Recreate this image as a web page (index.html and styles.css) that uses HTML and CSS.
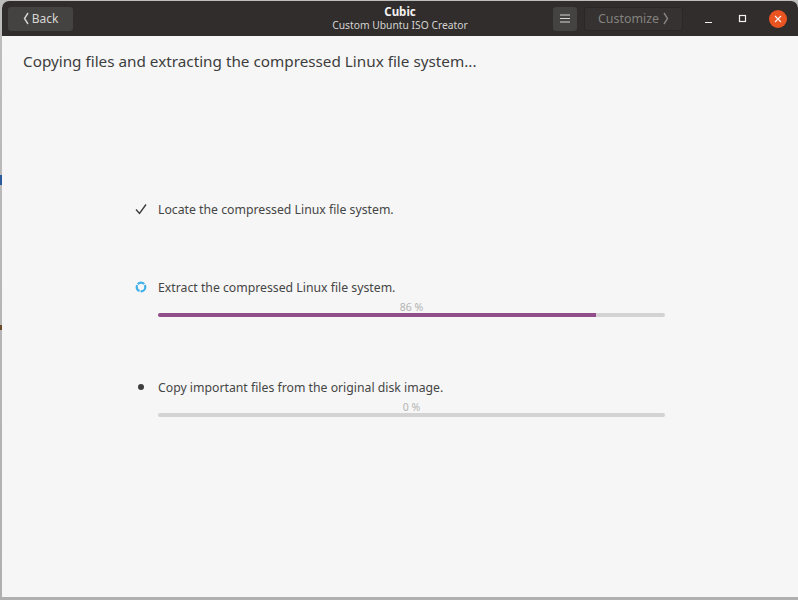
FILE: index.html
```html
<!DOCTYPE html>
<html lang="en">
  <head>
    <meta charset="UTF-8" />
    <title>Cubic</title>
    <link rel="stylesheet" href="styles.css">
  </head>
  <body>
    <div class="window">
      <div class="titlebar">
        <button class="btn btn_back">
          <svg class="chevron" width="6" height="13" viewBox="0 0 6 13"><path d="M5 1 L1.5 6.5 L5 12" /></svg>
          Back
        </button>
        <div class="title">
          <div class="title_main">Cubic</div>
          <div class="title_sub">Custom Ubuntu ISO Creator</div>
        </div>
        <button class="btn btn_menu">
          <svg width="10" height="9" viewBox="0 0 10 9"><path d="M0 1 H10 M0 4.5 H10 M0 8 H10" /></svg>
        </button>
        <button class="btn btn_next">
          Customize
          <svg class="chevron" width="6" height="13" viewBox="0 0 6 13"><path d="M1 1 L4.5 6.5 L1 12" /></svg>
        </button>
        <div class="win_controls">
          <svg width="10" height="10" viewBox="0 0 10 10"><path d="M1 8.5 H8" /></svg>
          <svg width="10" height="10" viewBox="0 0 10 10"><rect x="1.5" y="1.5" width="6" height="6" /></svg>
          <span class="win_close">
            <svg width="8" height="8" viewBox="0 0 8 8"><path d="M1 1 L7 7 M7 1 L1 7" /></svg>
          </span>
        </div>
      </div>

      <div class="content">
        <h1 class="heading">Copying files and extracting the compressed Linux file system...</h1>
        <ul class="steps">
          <li class="step step_done">
            <div class="step_row">
              <span class="step_icon">
                <svg width="14" height="14" viewBox="0 0 14 14"><path class="check" d="M2 7.5 L5.5 11.5 L12 2.5" /></svg>
              </span>
              <span>Locate the compressed Linux file system.</span>
            </div>
          </li>
          <li class="step step_active">
            <div class="step_row">
              <span class="step_icon">
                <svg class="spinner_icon" width="12" height="12" viewBox="0 0 12 12"><circle class="spinner" cx="6" cy="6" r="4.3" /></svg>
              </span>
              <span>Extract the compressed Linux file system.</span>
            </div>
            <div class="percent">86 %</div>
            <div class="bar"><div class="bar_fill" style="width: 86.4%"></div></div>
          </li>
          <li class="step step_todo">
            <div class="step_row">
              <span class="step_icon"><span class="dot"></span></span>
              <span>Copy important files from the original disk image.</span>
            </div>
            <div class="percent">0 %</div>
            <div class="bar"></div>
          </li>
        </ul>
      </div>
    </div>
  </body>
</html>
```

FILE: styles.css
```css
* {
  padding: 0;
  margin: 0;
  box-sizing: border-box;
}
body {
  width: 798px;
  height: 600px;
  overflow: hidden;
  padding: 1px 0 3px 2px;
  background:
    linear-gradient(#2a5a9a, #2a5a9a) 0 175px / 2px 10px no-repeat,
    linear-gradient(#6b4a2a, #6b4a2a) 0 325px / 2px 5px no-repeat,
    linear-gradient(#bdbdbd, #b0b0b0);
  font-family: "Noto Sans", "Liberation Sans", sans-serif;
  color: #3d3d3d;
}
.window {
  height: 596px;
  display: flex;
  flex-direction: column;
  background-color: #f6f6f6;
  border-radius: 7px 7px 0 0;
  overflow: hidden;
}

/* title bar */
.titlebar {
  height: 35px;
  flex: none;
  display: flex;
  align-items: center;
  padding: 0 11px 0 6px;
  background-color: #302d2c;
  color: #f2f1f0;
  position: relative;
}
.btn {
  height: 24px;
  display: flex;
  align-items: center;
  justify-content: center;
  border: 0;
  border-radius: 3px;
  background-color: #454341;
  color: #d8d6d4;
  font: 12px "Noto Sans", sans-serif;
}
.chevron path {
  fill: none;
  stroke: currentColor;
  stroke-width: 1.4;
}
.btn_back {
  width: 65px;
  gap: 3px;
}
.title {
  position: absolute;
  left: 0;
  right: 0;
  top: 4px;
  text-align: center;
  pointer-events: none;
}
.title_main {
  font-size: 11.5px;
  font-weight: 700;
  line-height: 14px;
}
.title_sub {
  font-size: 10.3px;
  line-height: 13px;
  color: #d5d3d1;
}
.btn_menu {
  width: 24px;
  margin-left: auto;
}
.btn_menu path {
  fill: none;
  stroke: #d8d6d4;
}
.btn_next {
  width: 99px;
  margin-left: 7px;
  gap: 4px;
  background-color: #353231;
  border: 1px solid #2a2827;
  color: #84827f;
  font-size: 12.4px;
}
.win_controls {
  display: flex;
  align-items: center;
  gap: 24px;
  margin-left: 21px;
}
.win_controls svg {
  display: block;
}
.win_controls path, .win_controls rect {
  fill: none;
  stroke: #f2f1f0;
  stroke-width: 1.2;
}
.win_close {
  width: 18px;
  height: 18px;
  display: flex;
  align-items: center;
  justify-content: center;
  border-radius: 50%;
  background-color: #e95420;
  margin-left: -3px;
}

/* main area */
.content {
  flex: 1;
  padding: 14px 0 0 21px;
}
.heading {
  font-size: 15.27px;
  font-weight: 400;
  line-height: 22px;
  color: #3d3d3d;
}
.steps {
  list-style: none;
  margin: 128px 0 0 111px;
}
.step {
  width: 531px;
  font-size: 12.26px;
  height: 78px;
  color: #454545;
}
.step_active {
  height: 100px;
}
.step_row {
  display: flex;
  align-items: center;
  height: 18px;
}
.step_icon {
  width: 24px;
  height: 14px;
  display: flex;
  align-items: center;
  flex: none;
}
.check {
  fill: none;
  stroke: #3d3d3d;
  stroke-width: 1.4;
}
.spinner_icon {
  margin-left: 1px;
}
.spinner {
  fill: none;
  stroke: #3fb0ea;
  stroke-width: 2.2;
  stroke-dasharray: 7 1.1;
}
.dot {
  width: 6px;
  height: 6px;
  margin-left: 4px;
  border-radius: 50%;
  background-color: #3d3d3d;
}
.percent {
  margin: 5px 0 0 24px;
  width: 507px;
  text-align: center;
  font-size: 10.5px;
  line-height: 12px;
  color: #b4b4b4;
}
.bar {
  width: 507px;
  height: 4px;
  margin: 0 0 0 24px;
  background-color: #d3d3d3;
  border-radius: 2px;
  overflow: hidden;
}
.bar_fill {
  height: 100%;
  background-color: #924d8b;
}
```
